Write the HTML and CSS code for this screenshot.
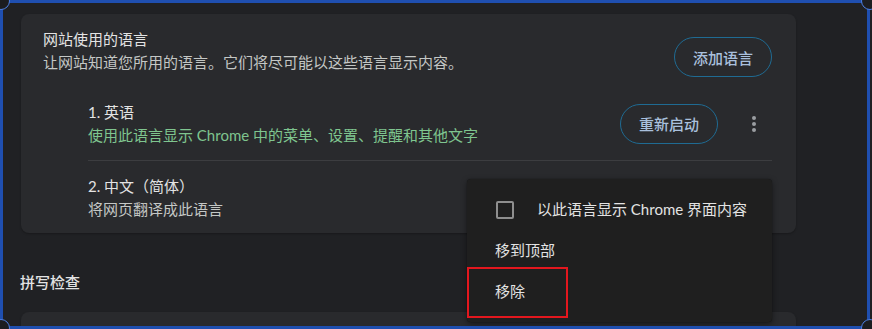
FILE: index.html
```html
<!DOCTYPE html>
<html lang="zh-CN">
<head>
<meta charset="utf-8">
<title>语言</title>
<link rel="stylesheet" href="styles.css">
</head>
<body>
<main class="page">
  <section class="card">
    <div class="card-head">
      <div class="head-text">
        <div class="title">网站使用的语言</div>
        <div class="sub">让网站知道您所用的语言。它们将尽可能以这些语言显示内容。</div>
      </div>
      <button class="pill">添加语言</button>
    </div>
    <ul class="lang-list">
      <li class="lang-row divided">
        <div class="lang-text">
          <div class="title">1. 英语</div>
          <div class="green">使用此语言显示 Chrome 中的菜单、设置、提醒和其他文字</div>
        </div>
        <button class="pill">重新启动</button>
        <button class="more" aria-label="更多操作"><span></span><span></span><span></span></button>
      </li>
      <li class="lang-row last">
        <div class="lang-text">
          <div class="title">2. 中文（简体）</div>
          <div class="sub">将网页翻译成此语言</div>
        </div>
      </li>
    </ul>
  </section>
  <h2 class="section-title">拼写检查</h2>
  <section class="card card-next"></section>
</main>

<div class="menu">
  <div class="menu-item check-item"><span class="checkbox"></span><span class="check-label">以此语言显示 Chrome 界面内容</span></div>
  <div class="menu-item top-item">移到顶部</div>
  <div class="menu-item remove-item">移除</div>
</div>
<div class="highlight"></div>

<div class="frame"></div>
<span class="handle h-tl"></span>
<span class="handle h-tr"></span>
<span class="handle h-bl"></span>
<span class="handle h-br"></span>
</body>
</html>
```
FILE: styles.css
```css
html, body {
  margin: 0;
  padding: 0;
}
body {
  width: 872px;
  height: 329px;
  overflow: hidden;
  background: #202124;
  color: #e8eaed;
  font-family: "Lato", "Noto Sans CJK SC", sans-serif;
  font-size: 15px;
  line-height: 22.5px;
  position: relative;
}
.page {
  padding: 14px 0 0 21px;
}
.card {
  width: 775px;
  box-sizing: border-box;
  background: #292a2d;
  border-radius: 8px;
  padding: 14px 24px 0 22px;
  box-shadow: 0 1px 2px rgba(0,0,0,0.25);
}
.card-head {
  display: flex;
  align-items: flex-start;
  justify-content: space-between;
}
.title {
  color: #e3e3e3;
}
.sub {
  color: #c4c7c5;
}
.green {
  color: #7fc58f;
}
.pill {
  margin-top: 9px;
  height: 40px;
  width: 98px;
  box-sizing: border-box;
  border: 1.5px solid #1f6b93;
  border-radius: 20px;
  background: transparent;
  color: #a9c0dd;
  font-family: inherit;
  font-size: 15px;
  font-weight: 500;
  padding: 0;
  flex: none;
}
.lang-list {
  list-style: none;
  margin: 10px 0 0 45px;
  padding: 0;
}
.lang-row {
  display: flex;
  align-items: center;
  padding: 14px 0;
}
.lang-row.divided {
  border-bottom: 1px solid #3c3d40;
}
.lang-row.last {
  padding-bottom: 13px;
}
.lang-text {
  flex: 1;
}
.lang-row .pill {
  margin-top: 0;
}
.more {
  width: 36px;
  height: 36px;
  margin-left: 18px;
  padding: 0;
  border: 0;
  background: transparent;
  display: flex;
  flex-direction: column;
  align-items: center;
  justify-content: center;
  gap: 2px;
  flex: none;
}
.more span {
  width: 4px;
  height: 4px;
  border-radius: 50%;
  background: #9a9da1;
}
.section-title {
  margin: 38px 0 0 -1px;
  font-size: 15px;
  font-weight: 500;
  line-height: 23px;
  color: #e3e3e3;
}
.card-next {
  margin-top: 18px;
  height: 17px;
  border-radius: 8px 8px 0 0;
}

/* context menu overlay */
.menu {
  position: absolute;
  left: 467px;
  top: 179px;
  width: 305px;
  height: 143px;
  box-sizing: border-box;
  background: #1f1f1f;
  border-radius: 4px;
  padding: 9px 0 0;
  box-shadow: 0 2px 6px rgba(0,0,0,0.45), 0 0 1px rgba(0,0,0,0.5);
}
.menu-item {
  display: flex;
  align-items: center;
  padding-left: 28px;
  color: #e3e3e3;
}
.check-item { height: 43px; }
.top-item { height: 38px; }
.remove-item { height: 44px; }
.checkbox {
  width: 18px;
  height: 18px;
  box-sizing: border-box;
  border: 2px solid #8e8e8e;
  border-radius: 2px;
  margin-left: 1px;
  flex: none;
}
.check-label {
  margin-left: 23px;
}
.highlight {
  position: absolute;
  left: 467px;
  top: 267px;
  width: 101px;
  height: 51px;
  box-sizing: border-box;
  border: 2px solid #e3171e;
}

/* screenshot selection frame */
.frame {
  position: absolute;
  left: 0;
  top: 0;
  width: 870px;
  height: 329px;
  box-sizing: border-box;
  border: 3px solid #1f4fb0;
  pointer-events: none;
}
.handle {
  position: absolute;
  width: 16px;
  height: 16px;
  border-radius: 50%;
  border: 1px solid #4c7fe3;
  background: #1c1d20;
}
.h-tl { left: -8px; top: -8px; }
.h-tr { left: 861px; top: -8px; }
.h-bl { left: -8px; top: 319px; }
.h-br { left: 861px; top: 319px; }
```
